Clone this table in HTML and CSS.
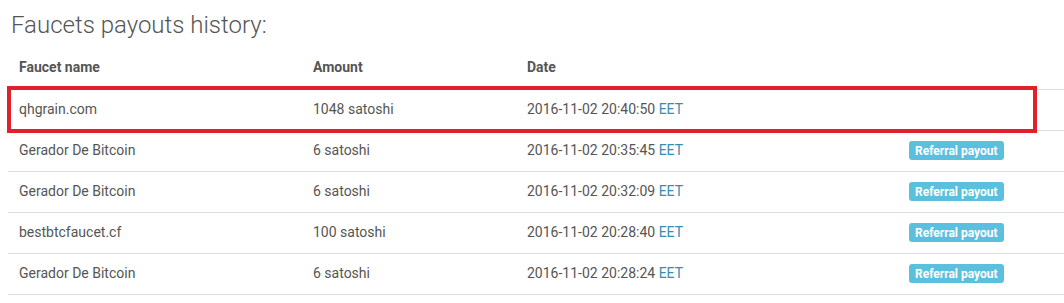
FILE: index.html
```html
<!DOCTYPE html>
<html>
<head>
<meta charset="utf-8">
<link rel="stylesheet" href="styles.css">
</head>
<body>
<div class="page">
  <h3 class="title">Faucets payouts history:</h3>
  <div class="table-wrap">
    <table class="payouts">
      <thead>
        <tr><th class="c-name">Faucet name</th><th class="c-amt">Amount</th><th class="c-date">Date</th><th class="c-tag"></th></tr>
      </thead>
      <tbody>
        <tr><td>qhgrain.com</td><td>1048 satoshi</td><td>2016-11-02 20:40:50 <span class="tz">EET</span></td><td></td></tr>
        <tr><td>Gerador De Bitcoin</td><td>6 satoshi</td><td>2016-11-02 20:35:45 <span class="tz">EET</span></td><td><span class="badge">Referral payout</span></td></tr>
        <tr><td>Gerador De Bitcoin</td><td>6 satoshi</td><td>2016-11-02 20:32:09 <span class="tz">EET</span></td><td><span class="badge">Referral payout</span></td></tr>
        <tr><td>bestbtcfaucet.cf</td><td>100 satoshi</td><td>2016-11-02 20:28:40 <span class="tz">EET</span></td><td><span class="badge">Referral payout</span></td></tr>
        <tr><td>Gerador De Bitcoin</td><td>6 satoshi</td><td>2016-11-02 20:28:24 <span class="tz">EET</span></td><td><span class="badge">Referral payout</span></td></tr>
      </tbody>
    </table>
    <div class="highlight"></div>
  </div>
</div>
</body>
</html>
```

FILE: styles.css
```css
* { box-sizing: border-box; }
html, body { margin: 0; padding: 0; background: #fff; }
body { font-family: Roboto, "Noto Sans", sans-serif; color: #555; font-size: 14px; }
.page { padding: 0 0 0 8px; }
.title {
  margin: 0;
  padding: 11px 0 0 3px;
  height: 48px;
  font-size: 24px;
  font-weight: 300;
  line-height: 28px;
  color: #555;
}
.table-wrap { position: relative; }
.payouts { width: 100%; border-collapse: collapse; }
.payouts th {
  text-align: left;
  font-weight: 700;
  font-size: 14px;
  color: #555;
  height: 41px;
  padding: 0 0 2px 11px;
  border-bottom: 1px solid #ddd;
  vertical-align: middle;
}
.payouts td {
  height: 41px;
  padding: 0 0 1px 11px;
  border-bottom: 1px solid #ddd;
  vertical-align: middle;
  font-size: 14px;
  color: #555;
}
.c-name { width: 294px; }
.c-amt { width: 214px; }
.c-date { width: 382px; }
.tz { color: #3a8bb0; }
.badge {
  display: inline-block;
  background: #5bc0de;
  color: #fff;
  font-weight: 700;
  font-size: 12px;
  line-height: 14px;
  padding: 3px 6px 2px;
  border-radius: 3px;
}
.highlight {
  position: absolute;
  left: -1px;
  top: 38px;
  width: 1030px;
  height: 47px;
  border: 4px solid #e0202a;
}
```
